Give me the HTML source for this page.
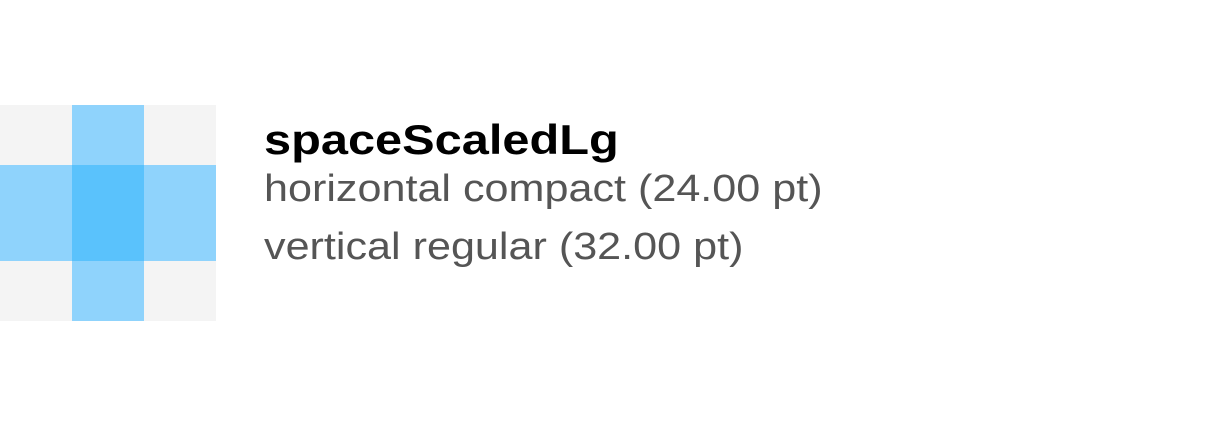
<!DOCTYPE html>
<html><head><style>
body{margin:0;width:1206px;height:426px;background:#fff;position:relative;overflow:hidden;font-family:"Liberation Sans",Arial,sans-serif}
.r{position:absolute}
.t{position:absolute;left:264px;white-space:nowrap;transform-origin:0 0;line-height:1.15}
</style></head><body>
<div class="r" style="left:0;top:105px;width:216px;height:216px;background:#f4f4f4"></div>
<div class="r" style="left:72px;top:105px;width:72px;height:216px;background:#8fd3fc"></div>
<div class="r" style="left:0;top:165px;width:216px;height:96px;background:#8fd3fc"></div>
<div class="r" style="left:72px;top:165px;width:72px;height:96px;background:#5ac2fc"></div>
<div class="t" style="top:116px;font-size:42px;font-weight:bold;color:#000;transform:scaleX(1.16)">spaceScaledLg</div>
<div class="t" style="top:168px;font-size:38px;color:#555;transform:scaleX(1.135)">horizontal compact (24.00 pt)</div>
<div class="t" style="top:226px;font-size:38px;color:#555;transform:scaleX(1.135)">vertical regular (32.00 pt)</div>
</body></html>
